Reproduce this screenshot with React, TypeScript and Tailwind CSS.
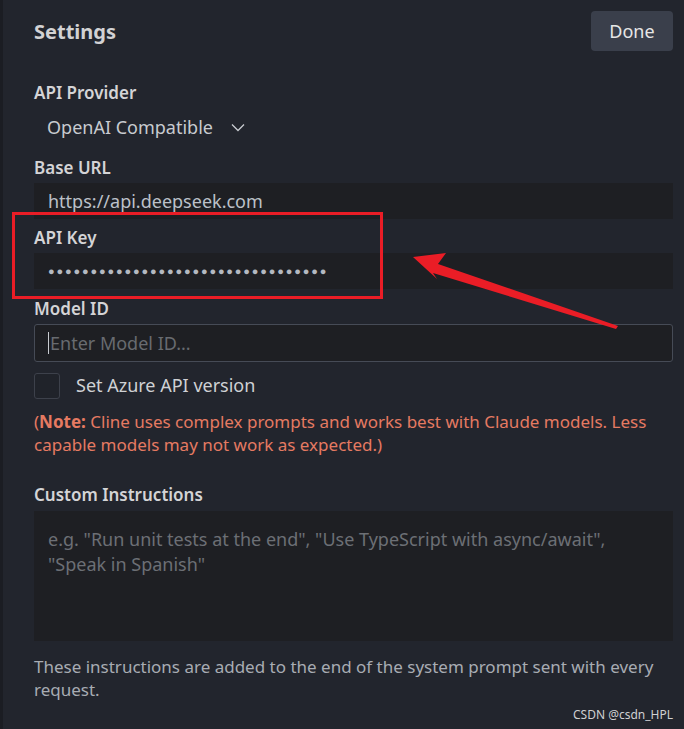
import React from 'react';

const font = { fontFamily: '"Noto Sans", "Open Sans", sans-serif' };

const Label: React.FC<{ children: React.ReactNode; className?: string }> = ({ children, className = '' }) => (
  <div className={`text-[17px] font-semibold leading-[24px] text-[#d4d4d6] ${className}`}>{children}</div>
);

const App: React.FC = () => {
  return (
    <div style={font} className="relative w-[684px] min-h-[729px] overflow-hidden border-l-[3px] border-[#1b1d23] bg-[#22252d]">
      <div className="pl-[31px] pr-[11px]">
        {/* Header */}
        <div className="flex items-start justify-between pt-[11px]">
          <h1 className="mt-[9px] text-[20px] font-bold leading-[24px] text-[#d2d2d4]">Settings</h1>
          <button className="h-[40px] w-[82px] rounded-[4px] bg-[#3a3f4b] text-[18px] text-[#e6e6e6]">Done</button>
        </div>

        {/* API Provider */}
        <Label className="mt-[30px]">API Provider</Label>
        <div className="mt-[4px] flex h-[36px] items-center pl-[13px] text-[18px] text-[#c8cbd0]">
          <span>OpenAI Compatible</span>
          <svg className="ml-[18px]" width="14" height="9" viewBox="0 0 14 9" fill="none">
            <path d="M1 1.5l6 6 6-6" stroke="#c8cbd0" strokeWidth="1.3" />
          </svg>
        </div>

        {/* Base URL */}
        <Label className="mt-[11px]">Base URL</Label>
        <div className="mt-[3px] flex h-[36px] items-center bg-[#1e1f23] pl-[14px] text-[18px] text-[#bcc1c9]">
          https://api.deepseek.com
        </div>

        {/* API Key */}
        <Label className="mt-[7px]">API Key</Label>
        <div className="mt-[3px] flex h-[36px] items-center bg-[#1e1f23] pl-[14px]">
          <span className="text-[11px] tracking-[1.85px] text-[#b4b9c1]">{'●'.repeat(33)}</span>
        </div>

        {/* Model ID */}
        <Label className="mt-[8px]">Model ID</Label>
        <div className="mt-[3px] flex h-[38px] items-center rounded-[3px] border border-[#464b56] bg-[#1e1f23] pl-[13px] text-[18px]">
          <span className="mr-[1px] h-[22px] w-[1px] bg-[#c8cbd0]" />
          <span className="text-[#686b70]">Enter Model ID...</span>
        </div>

        {/* Azure checkbox */}
        <div className="mt-[10px] flex items-center">
          <div className="h-[26px] w-[26px] rounded-[3px] border border-[#3d414b] bg-[#20232a]" />
          <span className="ml-[16px] text-[18px] text-[#cfd1d4]">Set Azure API version</span>
        </div>

        {/* Note */}
        <p className="mt-[11px] pr-[20px] text-[17px] leading-[23px] text-[#e57a62]">
          (<span className="font-bold">Note:</span> Cline uses complex prompts and works best with Claude models. Less capable models may not work as expected.)
        </p>

        {/* Custom Instructions */}
        <Label className="mt-[27px]">Custom Instructions</Label>
        <div className="mt-[4px] h-[130px] bg-[#1e1f23] pl-[14px] pr-[40px] pt-[16px] text-[18px] leading-[25px] text-[#6c6f75]">
          e.g. "Run unit tests at the end", "Use TypeScript with async/await", "Speak in Spanish"
        </div>

        <p className="mt-[14px] pr-[10px] text-[17px] leading-[23px] text-[#a8acb3]">
          These instructions are added to the end of the system prompt sent with every request.
        </p>
      </div>

      {/* Watermark */}
      <div className="absolute bottom-[5px] right-[11px] text-[12px] text-[#cfd0d2]">CSDN @csdn_HPL</div>

      {/* Annotation: red box + arrow */}
      <div className="pointer-events-none absolute left-[9px] top-[212px] h-[87px] w-[371px] border-[3px] border-[#ea1d26]" />
      <svg className="pointer-events-none absolute left-[-3px] top-0" width="684" height="729" viewBox="0 0 684 729">
        <polygon points="413,257 446,253 438,264 618,326 616,329 433,273 437,279" fill="#ea1d26" />
      </svg>
    </div>
  );
};

export default App;
